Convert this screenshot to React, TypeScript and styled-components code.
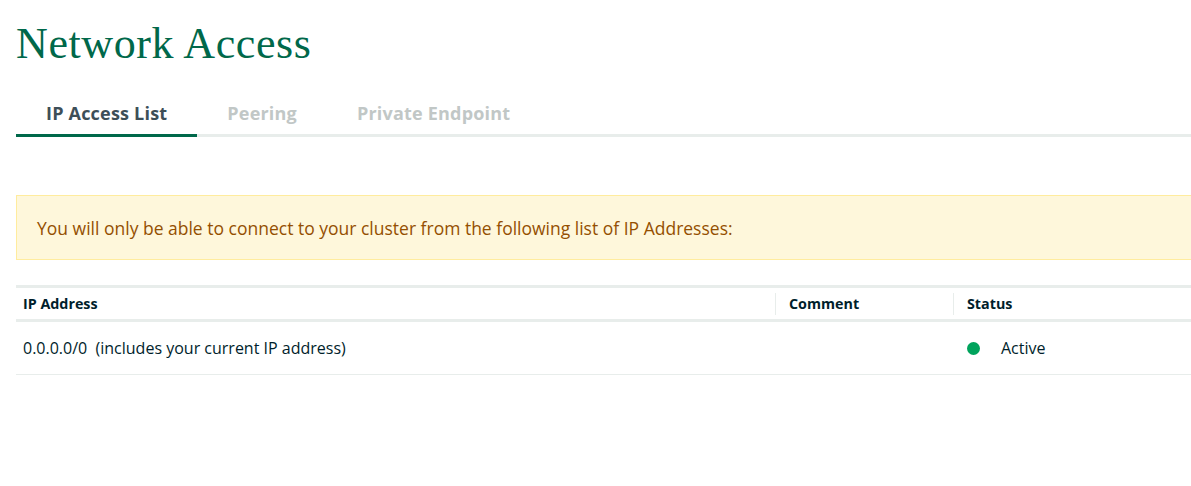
import React from "react";
import styled, { createGlobalStyle } from "styled-components";

const GlobalStyle = createGlobalStyle`
  html, body { margin: 0; padding: 0; background: #ffffff; overflow: hidden; }
  body { font-family: "Open Sans", "Liberation Sans", sans-serif; color: #001E2B; }
`;

const Page = styled.div`
  width: 1200px;
  padding: 18px 0 0 16px;
  box-sizing: border-box;
`;

const Title = styled.h1`
  margin: 0;
  font-family: "Liberation Serif", "DejaVu Serif", serif;
  font-weight: 400;
  font-size: 44px;
  line-height: 52px;
  color: #00684A;
  letter-spacing: 0.6px;
`;

const Tabs = styled.div`
  display: flex;
  margin-top: 34px;
  border-bottom: 3px solid #E8EDEB;
`;

const Tab = styled.div<{ $active?: boolean }>`
  padding: 0 30px;
  height: 30px;
  line-height: 19px;
  font-size: 18px;
  letter-spacing: 0.2px;
  font-weight: 700;
  color: ${(p) => (p.$active ? "#3D4F58" : "#C1C7C6")};
  margin-bottom: -3px;
  border-bottom: 3px solid ${(p) => (p.$active ? "#00684A" : "transparent")};
`;

const Banner = styled.div`
  margin-top: 58px;
  height: 63px;
  display: flex;
  align-items: center;
  padding-left: 20px;
  background: #FEF7DB;
  border: 1px solid #FFEC9E;
  color: #944F01;
  font-size: 17.5px;
`;

const Table = styled.div`
  margin-top: 25px;
  border-top: 3px solid #E8EDEB;
`;

const Row = styled.div<{ $header?: boolean }>`
  display: grid;
  grid-template-columns: 759px 178px 1fr;
  height: ${(p) => (p.$header ? "31px" : "52px")};
  border-bottom: ${(p) => (p.$header ? "3px" : "1px")} solid #E8EDEB;
  align-items: center;
`;

const HeadCell = styled.div<{ $divider?: boolean; $pad: number }>`
  font-size: 14.3px;
  font-weight: 700;
  color: #001E2B;
  padding-left: ${(p) => p.$pad}px;
  height: 22px;
  line-height: 22px;
  border-left: ${(p) => (p.$divider ? "1px solid #E8EDEB" : "none")};
`;

const Cell = styled.div<{ $pad: number }>`
  font-size: 16px;
  color: #001E2B;
  padding-left: ${(p) => p.$pad}px;
  display: flex;
  align-items: center;
  white-space: pre;
`;

const Dot = styled.span`
  width: 13px;
  height: 13px;
  border-radius: 50%;
  background: #00A35C;
  margin-right: 21px;
`;

export default function App() {
  return (
    <>
      <GlobalStyle />
      <Page>
        <Title>Network Access</Title>
        <Tabs>
          <Tab $active>IP Access List</Tab>
          <Tab>Peering</Tab>
          <Tab>Private Endpoint</Tab>
        </Tabs>
        <Banner>
          You will only be able to connect to your cluster from the following list of IP Addresses:
        </Banner>
        <Table>
          <Row $header>
            <HeadCell $pad={7}>IP Address</HeadCell>
            <HeadCell $pad={13} $divider>Comment</HeadCell>
            <HeadCell $pad={13} $divider>Status</HeadCell>
          </Row>
          <Row>
            <Cell $pad={7}>0.0.0.0/0  (includes your current IP address)</Cell>
            <Cell $pad={14}></Cell>
            <Cell $pad={14}>
              <Dot />
              Active
            </Cell>
          </Row>
        </Table>
      </Page>
    </>
  );
}
